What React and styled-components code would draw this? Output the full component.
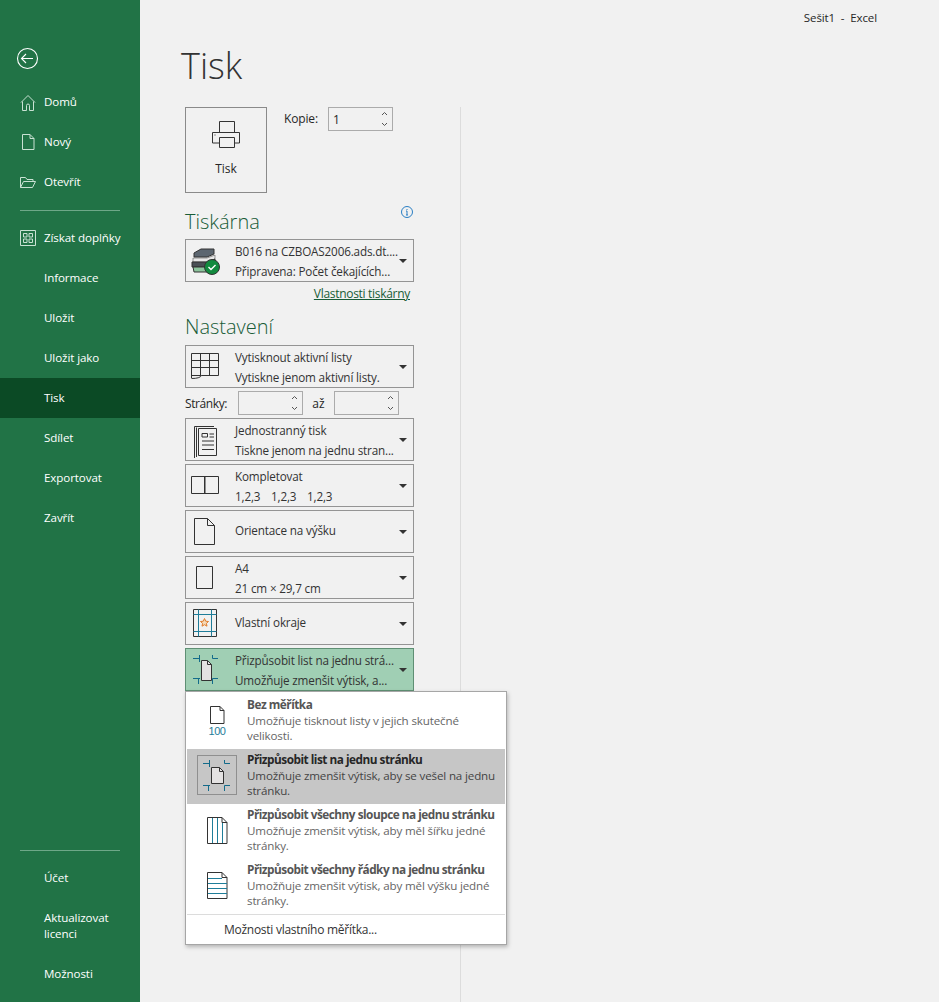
import React from "react";
import styled, { createGlobalStyle } from "styled-components";

const Global = createGlobalStyle`
  html, body { margin: 0; padding: 0; background: #f1f1f1; }
  * { box-sizing: border-box; }
  body { font-family: "Open Sans", "Noto Sans", "Liberation Sans", sans-serif; font-size: 12px; color: #262626; overflow: hidden; }
`;

const Page = styled.div`display: flex; width: 939px; height: 1002px; overflow: hidden;`;

const Sidebar = styled.nav`
  width: 140px; flex: none; background: #217346; color: #fff; display: flex; flex-direction: column;
  padding: 47px 0 8px;
`;
const BackButton = styled.div`height: 35px; padding-left: 16px; display: flex; align-items: flex-start;`;
const NavItem = styled.div`
  display: flex; align-items: center; gap: 6px; height: ${p => p.$tall ? 56 : 40}px;
  padding-left: ${p => p.$icon ? 18 : 44}px; font-size: 11.6px; line-height: 16px; letter-spacing: -0.1px;
  background: ${p => p.$active ? "#0b4a25" : "transparent"};
`;
const NavIcon = styled.svg`width: 20px; height: 20px; flex: none; fill: none; stroke: #c9e2d3; stroke-width: 1;`;
const NavSep = styled.div`height: 1px; background: #6ea888; margin: 8px 20px 7px;`;
const Spacer = styled.div`flex: 1;`;

const Main = styled.main`flex: 1; display: flex; flex-direction: column; min-width: 0;`;
const WindowTitle = styled.div`
  height: 34px; padding: 9px 62px 0 0; text-align: right; font-size: 11.5px; line-height: 17px; white-space: pre; letter-spacing: -0.1px;
`;
const Title = styled.h1`
  margin: 0; padding-left: 41px; height: 73px; font: 300 36px/63px "Open Sans", sans-serif; color: #333;
`;
const PrintArea = styled.div`flex: 1; margin-left: 45px; width: 276px; border-right: 1px solid #dcdcdc; position: relative;`;
const Column = styled.div`width: 229px; display: flex; flex-direction: column;`;
const TopRow = styled.div`display: flex; height: 86px;`;
const PrintButton = styled.button`
  width: 82px; height: 86px; background: #f1f1f1; border: 1px solid #8a8a8a; padding: 11px 0 0; display: flex; flex-direction: column; align-items: center;
  font: 12px/16px "Open Sans", sans-serif; color: #262626; gap: 12px;
`;
const CopiesRow = styled.div`display: flex; align-items: flex-start; margin-left: 17px; gap: 10px;`;
const FieldLabel = styled.span`font-size: 12px; line-height: 24px; letter-spacing: -0.15px;`;
const Spinner = styled.div`
  width: ${p => p.$w}px; flex: none; height: 24px; border: 1px solid #ababab; display: flex; align-items: center; justify-content: space-between;
  padding: 0 3px 0 4px; font-size: 12px;
`;
const SpinArrows = styled.svg`width: 9px; height: 20px; fill: none; stroke: #555; stroke-width: 1;`;
const SectionHead = styled.div`
  display: flex; justify-content: space-between; align-items: flex-start;
  height: ${p => p.$h}px; padding-top: ${p => p.$pt}px; font: 300 20px/28px "Open Sans", sans-serif; color: #185c37;
`;
const InfoIcon = styled.svg`width: 14px; height: 14px; margin-top: -3px; fill: none;`;
const Drop = styled.div`
  width: 229px; height: 43px; flex: none; border: 1px solid ${p => p.$on ? "#5f8f74" : "#949494"}; display: flex; align-items: center; position: relative;
  margin-top: ${p => p.$mt ?? 3}px; background: ${p => p.$on ? "#a0cfb4" : "transparent"};
`;
const DropIcon = styled.svg`width: 48px; height: 41px; flex: none; fill: none; stroke: #333; stroke-width: 1;`;
const DropText = styled.div`
  margin-left: 1px; margin-bottom: ${p => p.$single ? 3 : 0}px; font-size: 11.7px; line-height: 20px; white-space: nowrap; color: #333; flex: 1; letter-spacing: -0.16px; display: flex; flex-direction: column;
`;
const CollateRow = styled.span`display: flex;`;
const CollateSet = styled.span`width: 36px;`;
const Caret = styled.span`
  width: 0; height: 0; border-left: 4px solid transparent; border-right: 4px solid transparent; border-top: 4px solid #333; margin-right: 6px; flex: none;
`;
const LinkRow = styled.div`height: 22px; padding: 3px 4px 0 0; text-align: right; line-height: 18px;`;
const PrinterLink = styled.a`color: #185c37; text-decoration: underline; font-size: 12px; letter-spacing: -0.3px;`;
const PagesRow = styled.div`display: flex; align-items: center; margin-top: 3px; height: 24px;`;
const PagesLabel = styled.span`width: 53px; flex: none; font-size: 12px; letter-spacing: -0.4px;`;
const PagesTo = styled.span`width: 31px; flex: none; text-align: center; font-size: 12px;`;

const Popup = styled.div`
  position: absolute; left: 0; top: 584px; width: 322px; height: 254px; background: #fff; border: 1px solid #a6a6a6;
  box-shadow: 1px 2px 4px rgba(0,0,0,.25); padding: 2px 1px 0;
`;
const PopItem = styled.div`
  display: flex; height: 55px; background: ${p => p.$on ? "#c6c6c6" : "transparent"}; padding: 2px 0 0 10px;
`;
const PopIcon = styled.svg`
  width: 40px; height: 40px; flex: none; margin-top: 4px; fill: none; stroke: #333; stroke-width: 1;
  outline: ${p => p.$on ? "1px solid #8f8f8f" : "none"}; outline-offset: -1px;
`;
const PopText = styled.div`margin-left: 10px; display: flex; flex-direction: column;`;
const PopTitle = styled.div`font-size: 11.8px; line-height: 16px; font-weight: 700; white-space: nowrap; letter-spacing: -0.5px; color: ${p => p.$on ? "#262626" : "#555"};`;
const PopDesc = styled.div`font-size: 11.6px; line-height: 15px; margin-top: 1px; width: 252px; letter-spacing: -0.15px; color: ${p => p.$on ? "#444" : "#666"};`;
const PopSep = styled.div`height: 1px; background: #dcdcdc;`;
const PopLink = styled.div`padding-left: 37px; line-height: 29px; font-size: 12px; color: #333; letter-spacing: -0.27px;`;

const Arrows = () => (
  <SpinArrows viewBox="0 0 9 20"><path d="M2 6l2.500-2.500L7 6M2 14l2.500 2.500L7 14" /></SpinArrows>
);

const Crop = ({ ox, oy, w, h, d, top, bottom }) => (
  <g transform={`translate(${ox} ${oy})`}>
    <path d={`M.5.5H${w - d - .5}L${w - .5} ${d + .5}V${h - .5}H.5Z`} fill="#e4e2e2" stroke="#333" />
    <path d={`M${w - d - .5}.5V${d + .5}H${w - .5}`} stroke="#333" />
    <path
      d={`M-1.500 ${top - 3}V${top + 4}M-8 ${top + .5}H-1M${w + .5} ${top - 3}V${top + .5}H${w + 6}M-8 ${bottom + .5}H-1M-2.500 ${bottom}V${bottom + 6}M${w + .5} ${bottom + 6}V${bottom + .5}H${w + 6}`}
      stroke="#136b8a"
    />
  </g>
);

export default function App() {
  return (
    <Page>
      <Global />
      <Sidebar>
        <BackButton>
          <svg width="23" height="23" viewBox="0 0 23 23" fill="none" stroke="#fff" strokeWidth="1.1">
            <circle cx="11.5" cy="11.5" r="10" />
            <path d="M17 11.500H6M10 7l-4.500 4.500L10 16" />
          </svg>
        </BackButton>
        <NavItem $icon>
          <NavIcon viewBox="0 0 20 20"><path d="M3 10.500L10 3.500l7 7M4.500 9.500V18.500H8.500V13.500a1.500 1.500 0 0 1 3 0V18.500H15.500V9.500" /></NavIcon>
          Domů
        </NavItem>
        <NavItem $icon>
          <NavIcon viewBox="0 0 20 20"><path d="M4.500 2.500H12L16 6.500V17.500H4.500ZM12 2.500V6.500H16" /></NavIcon>
          Nový
        </NavItem>
        <NavItem $icon>
          <NavIcon viewBox="0 0 20 20"><path d="M2.500 15.500V5.500H7.500L9 7.500H15V9.500M2.500 15.500L5.500 9.500H17.500L14.500 15.500Z" /></NavIcon>
          Otevřít
        </NavItem>
        <NavSep />
        <NavItem $icon>
          <NavIcon viewBox="0 0 20 20"><path d="M2.500 2.500H17.500V17.500H2.500ZM5.500 5.500H9V9H5.500ZM11 5.500H14.500V9H11ZM5.500 11H9V14.500H5.500ZM11 11H14.500V14.500H11Z" /></NavIcon>
          Získat doplňky
        </NavItem>
        <NavItem>Informace</NavItem>
        <NavItem>Uložit</NavItem>
        <NavItem>Uložit jako</NavItem>
        <NavItem $active>Tisk</NavItem>
        <NavItem>Sdílet</NavItem>
        <NavItem>Exportovat</NavItem>
        <NavItem>Zavřít</NavItem>
        <Spacer />
        <NavSep />
        <NavItem>Účet</NavItem>
        <NavItem $tall><span>Aktualizovat<br />licenci</span></NavItem>
        <NavItem>Možnosti</NavItem>
      </Sidebar>

      <Main>
        <WindowTitle>Sešit1  -  Excel</WindowTitle>
        <Title>Tisk</Title>
        <PrintArea>
          <Column>
            <TopRow>
              <PrintButton>
                <svg width="30" height="30" viewBox="0 0 30 30" fill="none" stroke="#333">
                  <path d="M8.500 13V2.500H23.500V13M8.500 24H1.500V13.500H28.500V24H23.500" />
                  <path d="M8.500 18.500H23.500V28.500H8.500Z" />
                  <path d="M3.500 16h1" />
                </svg>
                Tisk
              </PrintButton>
              <CopiesRow>
                <FieldLabel>Kopie:</FieldLabel>
                <Spinner $w={65}>1<Arrows /></Spinner>
              </CopiesRow>
            </TopRow>
            <SectionHead $h={46} $pt={15}>
              Tiskárna
              <InfoIcon viewBox="0 0 14 14" stroke="#2a7fc4">
                <circle cx="7" cy="7" r="5.500" />
                <path d="M7 6v4M7 4v1M6 6h1M6 10h2" />
              </InfoIcon>
            </SectionHead>
            <Drop $mt={0}>
              <DropIcon viewBox="0 0 48 41" stroke="none">
                <path d="M8 13l7-4h13v5l-7 3H8Z" fill="#5c6670" />
                <path d="M7 18h14l8-3v4l-8 3H7Z" fill="#e8e8e8" stroke="#555" strokeWidth=".6" />
                <path d="M6 22h16l7-3v4l-7 4H6Z" fill="#4a4f55" />
                <path d="M7 27h16l6-3v3l-6 5H8Z" fill="#8cc49c" />
                <circle cx="26" cy="27" r="7.500" fill="#128a3e" />
                <path d="M22.500 27l2.500 2.500 4.500-4.500" fill="none" stroke="#fff" strokeWidth="1.400" />
              </DropIcon>
              <DropText><span>B016 na CZBOAS2006.ads.dt....</span><span>Připravena: Počet čekajících...</span></DropText>
              <Caret />
            </Drop>
            <LinkRow><PrinterLink>Vlastnosti tiskárny</PrinterLink></LinkRow>
            <SectionHead $h={41} $pt={9}>Nastavení</SectionHead>

            <Drop $mt={0}>
              <DropIcon viewBox="0 0 48 41">
                <path d="M5.500 32V7.500H32.500V29.500H15.500Q14 32.500 5.500 32.500M5.500 14.500H32.500M5.500 21.500H32.500M14.500 7.500V29.500M23.500 7.500V29.500M5.500 29.500H15.500" />
              </DropIcon>
              <DropText><span>Vytisknout aktivní listy</span><span>Vytiskne jenom aktivní listy.</span></DropText>
              <Caret />
            </Drop>
            <PagesRow>
              <PagesLabel>Stránky:</PagesLabel>
              <Spinner $w={65}><span /><Arrows /></Spinner>
              <PagesTo>až</PagesTo>
              <Spinner $w={65}><span /><Arrows /></Spinner>
            </PagesRow>
            <Drop>
              <DropIcon viewBox="0 0 48 41">
                <path d="M12.500 9.500H30.500V36.500H12.500ZM8.500 39V7.500H28M10.500 38V8.500" />
                <path d="M16 14.500H21.500V18H16ZM23.500 15H28M23.500 18H28M16 22H28M16 26H28M16 30.500H28" />
              </DropIcon>
              <DropText><span>Jednostranný tisk</span><span>Tiskne jenom na jednu stran...</span></DropText>
              <Caret />
            </Drop>
            <Drop>
              <DropIcon viewBox="0 0 48 41">
                <path d="M5.500 11.500H32.500V28.500H5.500ZM19 11.500V28.500" />
                <path d="M18.500 11.500V28.500" />
              </DropIcon>
              <DropText>
                <span>Kompletovat</span>
                <CollateRow><CollateSet>1,2,3</CollateSet><CollateSet>1,2,3</CollateSet><CollateSet>1,2,3</CollateSet></CollateRow>
              </DropText>
              <Caret />
            </Drop>
            <Drop>
              <DropIcon viewBox="0 0 48 41">
                <path d="M8.500 7.500H21.500L28.500 14.500V33.500H8.500ZM21.500 7.500V14.500H28.500" />
              </DropIcon>
              <DropText $single><span>Orientace na výšku</span></DropText>
              <Caret />
            </Drop>
            <Drop>
              <DropIcon viewBox="0 0 48 41">
                <path d="M10.500 9.500H26.500V31.500H10.500Z" />
              </DropIcon>
              <DropText><span>A4</span><span>21 cm × 29,7 cm</span></DropText>
              <Caret />
            </Drop>
            <Drop>
              <DropIcon viewBox="0 0 48 41">
                <path d="M7.500 6.500H30.500V33.500H7.500Z" />
                <path d="M12.500 6.500V33.500M25.500 6.500V33.500M7.500 11.500H30.500M7.500 28.500H30.500" stroke="#1f7d99" />
                <path d="M18.500 15.500l1.200 2.700 2.800.3-2.100 1.900.6 2.800-2.500-1.500-2.500 1.500.6-2.800-2.100-1.900 2.800-.3Z" stroke="#e07b2a" fill="#f4d9b8" />
              </DropIcon>
              <DropText $single><span>Vlastní okraje</span></DropText>
              <Caret />
            </Drop>
            <Drop $on>
              <DropIcon viewBox="0 0 48 41"><Crop ox={15} oy={11} w={11} h={21} d={4} top={-2} bottom={18} /></DropIcon>
              <DropText><span>Přizpůsobit list na jednu strá...</span><span>Umožňuje zmenšit výtisk, a...</span></DropText>
              <Caret />
            </Drop>
          </Column>

          <Popup>
            <PopItem>
              <PopIcon viewBox="0 0 40 40">
                <path d="M13.500 6.500H23L27 10.500V23.500H13.500ZM23 6.500V10.500H27" />
                <text x="20" y="35" textAnchor="middle" fontSize="11" fontFamily="Liberation Sans" letterSpacing="-.5" fill="#1f7d99" stroke="none">100</text>
              </PopIcon>
              <PopText>
                <PopTitle>Bez měřítka</PopTitle>
                <PopDesc>Umožňuje tisknout listy v jejich skutečné velikosti.</PopDesc>
              </PopText>
            </PopItem>
            <PopItem $on>
              <PopIcon $on viewBox="0 0 40 40"><Crop ox={14} oy={12} w={13} h={17} d={4} top={-4} bottom={18} /></PopIcon>
              <PopText>
                <PopTitle $on>Přizpůsobit list na jednu stránku</PopTitle>
                <PopDesc $on>Umožňuje zmenšit výtisk, aby se vešel na jednu stránku.</PopDesc>
              </PopText>
            </PopItem>
            <PopItem>
              <PopIcon viewBox="0 0 40 40">
                <path d="M10.500 7.500H25L30 12.500V33.500H10.500ZM25 7.500V12.500H30" />
                <path d="M15.500 8V33M20.500 8V33M25.500 13V33" stroke="#1f7d99" />
              </PopIcon>
              <PopText>
                <PopTitle>Přizpůsobit všechny sloupce na jednu stránku</PopTitle>
                <PopDesc>Umožňuje zmenšit výtisk, aby měl šířku jedné stránky.</PopDesc>
              </PopText>
            </PopItem>
            <PopItem>
              <PopIcon viewBox="0 0 40 40">
                <path d="M10.500 7.500H25L30 12.500V33.500H10.500ZM25 7.500V12.500H30" />
                <path d="M11 13.500H25M11 18.500H30M11 23.500H30M11 28.500H30" stroke="#1f7d99" />
              </PopIcon>
              <PopText>
                <PopTitle>Přizpůsobit všechny řádky na jednu stránku</PopTitle>
                <PopDesc>Umožňuje zmenšit výtisk, aby měl výšku jedné stránky.</PopDesc>
              </PopText>
            </PopItem>
            <PopSep />
            <PopLink>Možnosti vlastního měřítka...</PopLink>
          </Popup>
        </PrintArea>
      </Main>
    </Page>
  );
}
